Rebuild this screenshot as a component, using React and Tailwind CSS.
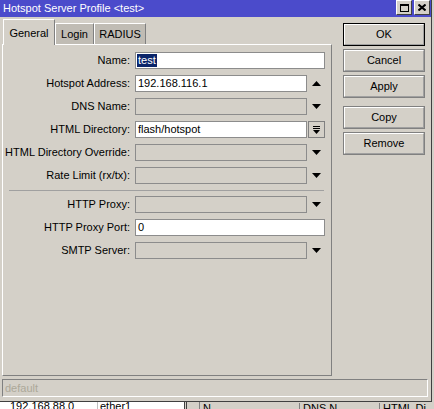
import React from 'react';

const font = { fontFamily: '"Liberation Sans", Arial, sans-serif' };

// raised button
const Btn = ({ label, isDefault, className = '' }) => (
  <div
    className={`w-[82px] h-[23px] flex items-center justify-center text-[11px] text-black bg-[#d4d0c8] ${
      isDefault ? 'border border-black' : 'border border-[#808080]'
    } ${className}`}
  >
    <div className="w-full h-full flex items-center justify-center border-t border-l border-white border-b border-r border-b-[#a0a0a0] border-r-[#a0a0a0]">
      {label}
    </div>
  </div>
);

const ArrowUp = () => (
  <svg width="9" height="5" viewBox="0 0 9 5">
    <path d="M4.5 0 L9 5 L0 5 Z" fill="#000" />
  </svg>
);

const ArrowDown = () => (
  <svg width="9" height="5" viewBox="0 0 9 5">
    <path d="M0 0 L9 0 L4.5 5 Z" fill="#000" />
  </svg>
);

const Row = ({ label, value, disabled, full, selected, side }) => (
  <div className="flex items-center h-[17px] mb-[6px]">
    <div className="w-[127px] text-right text-[11px] text-black leading-none whitespace-nowrap">{label}</div>
    <div
      className={`ml-[5px] h-[17px] border border-[#8c8c8c] flex items-center px-[1px] text-[11px] text-black ${
        disabled ? 'bg-[#d4d0c8]' : 'bg-white'
      } ${full ? 'w-[190px]' : 'w-[172px]'}`}
    >
      {selected ? (
        <span className="bg-[#0a246a] text-white px-[1px] leading-[13px]">{value}</span>
      ) : (
        <span className="pl-[1px]">{value}</span>
      )}
    </div>
    {!full && (
      <div className="w-[18px] h-[17px] flex items-center justify-center">
        {side === 'up' && <ArrowUp />}
        {side === 'down' && <ArrowDown />}
        {side === 'btn' && (
          <div className="ml-[1px] w-[17px] h-[17px] border border-[#808080] bg-[#d4d0c8] flex items-center justify-center">
            <svg width="7" height="8" viewBox="0 0 7 8">
              <rect x="0" y="0" width="7" height="1" fill="#000" />
              <rect x="0" y="2" width="7" height="1" fill="#000" />
              <path d="M0 4 L7 4 L3.5 8 Z" fill="#000" />
            </svg>
          </div>
        )}
      </div>
    )}
  </div>
);

export default function App() {
  return (
    <div className="w-[434px] h-[409px] bg-[#d4d0c8] overflow-hidden" style={font}>
      <div className="w-[432px] h-[402px] flex flex-col border-r border-b border-[#404040]">
        {/* title bar */}
        <div className="h-[17px] bg-[#4b4bcb] flex items-center justify-between pl-[3px] pr-[1px]">
          <span className="text-white text-[11px] leading-none">Hotspot Server Profile &lt;test&gt;</span>
          <div className="flex gap-[2px] self-start mt-[0px]">
            <div className="w-[16px] h-[15px] bg-[#d4d0c8] border-t border-l border-white border-b border-r border-b-[#404040] border-r-[#404040] flex items-center justify-center">
              <div className="w-[9px] h-[8px] border border-black border-t-2" />
            </div>
            <div className="w-[16px] h-[15px] bg-[#d4d0c8] border-t border-l border-white border-b border-r border-b-[#404040] border-r-[#404040] flex items-center justify-center">
              <svg width="8" height="7" viewBox="0 0 8 7">
                <path d="M0.5 0.5 L7.5 6.5 M7.5 0.5 L0.5 6.5" stroke="#000" strokeWidth="2" />
              </svg>
            </div>
          </div>
        </div>

        <div className="flex">
          {/* left: tabs + panel */}
          <div className="ml-[2px] w-[330px] flex flex-col">
            <div className="h-[27px] flex items-end pl-[1px] text-[11px] text-black">
              <div className="w-[52px] h-[26px] mb-[-1px] relative z-10 bg-[#d4d0c8] border-t border-l border-white border-r border-r-[#808080] flex items-start justify-center pt-[5px]">
                General
              </div>
              <div className="w-[39px] h-[21px] bg-[#c0bcb4] border-t border-l border-white border-r border-r-[#808080] flex items-center justify-center">
                Login
              </div>
              <div className="w-[52px] h-[21px] bg-[#c0bcb4] border-t border-l border-white border-r border-r-[#808080] flex items-center justify-center">
                RADIUS
              </div>
            </div>
            <div className="h-[332px] border-t border-l border-white border-r border-b border-r-[#808080] border-b-[#808080] pt-[7px]">
              <Row label="Name:" value="test" full selected />
              <Row label="Hotspot Address:" value="192.168.116.1" side="up" />
              <Row label="DNS Name:" disabled side="down" />
              <Row label="HTML Directory:" value="flash/hotspot" side="btn" />
              <Row label="HTML Directory Override:" disabled side="down" />
              <Row label="Rate Limit (rx/tx):" disabled side="down" />
              <div className="ml-[6px] w-[315px] mt-[2px] mb-[5px] h-[1px] bg-[#a0a0a0]" />
              <Row label="HTTP Proxy:" disabled side="down" />
              <Row label="HTTP Proxy Port:" value="0" full />
              <Row label="SMTP Server:" disabled side="down" />
            </div>
          </div>

          {/* right: buttons */}
          <div className="ml-[11px] pt-[6px] flex flex-col gap-[3px]">
            <Btn label="OK" isDefault />
            <Btn label="Cancel" />
            <Btn label="Apply" />
            <Btn label="Copy" className="mt-[5px]" />
            <Btn label="Remove" />
          </div>
        </div>

        {/* status bar */}
        <div className="ml-[2px] mt-[3px] w-[426px] h-[18px] border-t border-l border-[#808080] border-b border-r border-b-white border-r-white flex items-center pl-[2px] text-[11px] text-[#aca899]">
          default
        </div>
      </div>

      {/* window underneath */}
      <div className="h-[7px] flex overflow-hidden text-[11px] text-black">
        <div className="w-[184px] bg-white flex">
          <div className="w-[98px] pl-[10px] border-r border-[#c0c0c0] leading-[11px] mt-[-1px]">192.168.88.0</div>
          <div className="pl-[2px] leading-[11px] mt-[-1px]">ether1</div>
        </div>
        <div className="w-[3px] border-l border-r border-[#404040] bg-[#d4d0c8]" />
        <div className="flex-1 flex bg-[#d4d0c8]">
          <div className="w-[13px] border-r border-[#808080]" />
          <div className="w-[100px] pl-[3px] border-r border-[#808080] leading-[11px] mt-[1px]">N</div>
          <div className="w-[80px] pl-[3px] border-r border-[#808080] leading-[11px] mt-[1px]">DNS N</div>
          <div className="pl-[3px] leading-[11px] mt-[1px]">HTML Di</div>
        </div>
      </div>
    </div>
  );
}
